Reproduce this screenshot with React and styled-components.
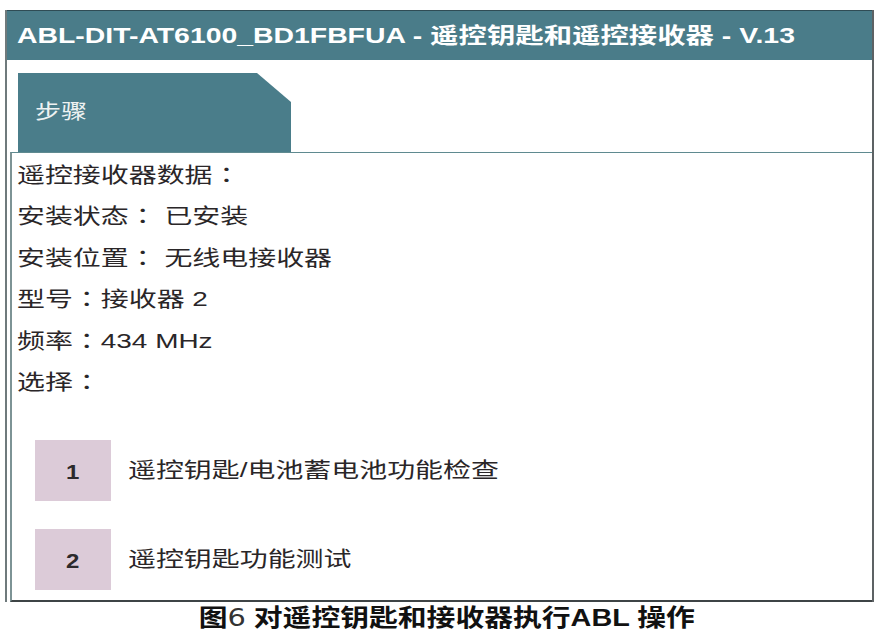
import React from "react";
import styled, { createGlobalStyle } from "styled-components";

// the source is a scanned screen that is stretched sideways, so text is widened with scaleX

const GlobalStyle = createGlobalStyle`
    html, body {
        margin: 0;
        padding: 0;
        background: #fff;
        overflow: hidden;
    }
    body {
        font-family: "Liberation Sans", "Noto Sans CJK SC", sans-serif;
        color: #2a2628;
    }
`;

const Page = styled.div`
    width: 886px;
    height: 631px;
    padding: 10px 0 0 5px;
    box-sizing: border-box;
    overflow: hidden;
`;

const Frame = styled.div`
    width: 869px;
    height: 592px;
    box-sizing: border-box;
    border-left: 2px solid #6f7a7c;
    border-right: 2px solid #5d6264;
    display: flex;
    flex-direction: column;
`;

const Wide = styled.span`
    display: inline-block;
    white-space: nowrap;
    transform: scaleX(${(p) => p.$scale || 1.33});
    transform-origin: ${(p) => (p.$center ? "center" : "left")} center;
`;

// full-width colon sitting in the middle of its cell, as in the source
const Colon = styled.span`
    font-family: "Noto Sans CJK TC", sans-serif;
    line-height: 0;
`;

const Header = styled.div`
    height: 50px;
    flex-shrink: 0;
    background: #4a7c89;
    border-top: 1px solid #2f4c55;
    box-sizing: border-box;
    display: flex;
    align-items: center;
    padding: 0 0 5px 10px;
    color: #fff;
    font-weight: bold;
    font-size: 22px;
`;

const Body = styled.div`
    flex: 1;
    display: flex;
    flex-direction: column;
    padding-top: 13px;
`;

const Tab = styled.div`
    margin-left: 11px;
    width: 273px;
    height: 79px;
    flex-shrink: 0;
    background: #4a7d8a;
    clip-path: polygon(0 0, 239px 0, 273px 29px, 273px 100%, 0 100%);
    color: #eef2f2;
    font-size: 20px;
    display: flex;
    align-items: center;
    padding: 0 0 4px 17px;
    box-sizing: border-box;
`;

const Panel = styled.div`
    flex: 1;
    margin-left: 3px;
    border-top: 1px solid #5f8a90;
    border-left: 2px solid #7d9395;
    border-bottom: 2px solid #3e4446;
    padding: 1px 0 0 5px;
    display: flex;
    flex-direction: column;
`;

const Line = styled.div`
    font-size: 21px;
    line-height: 41.4px;
    height: 41.4px;
`;

const Options = styled.div`
    display: flex;
    flex-direction: column;
    gap: 28px;
    margin-top: 38px;
    margin-left: 18px;
`;

const Option = styled.div`
    display: flex;
    align-items: center;
    gap: 17px;
`;

const NumBox = styled.div`
    width: 76px;
    height: 61px;
    flex-shrink: 0;
    background: #dccbd8;
    display: flex;
    align-items: center;
    justify-content: center;
    font-weight: bold;
    font-size: 20px;
    color: #2c2a2c;
    padding-top: 4px;
    box-sizing: border-box;
`;

const OptionText = styled.div`
    font-size: 21px;
    margin-top: -6px;
`;

const Caption = styled.div`
    text-align: center;
    padding-left: 2px;
    margin-top: 4px;
    font-size: 24px;
    line-height: 24px;
    font-weight: bold;
    color: #111;
`;

const Six = styled.span`
    font-family: "DejaVu Sans", sans-serif;
    font-weight: normal;
    color: #333;
`;

const lines = [
    ["遥控接收器数据", ""],
    ["安装状态", " 已安装"],
    ["安装位置", " 无线电接收器"],
    ["型号", "接收器 2"],
    ["频率", "434 MHz"],
    ["选择", ""],
];

const options = [
    { num: 1, label: "遥控钥匙/电池蓄电池功能检查" },
    { num: 2, label: "遥控钥匙功能测试" },
];

const App = () => {
    return (
        <Page>
            <GlobalStyle />
            <Frame>
                <Header>
                    <Wide $scale={1.29}>ABL-DIT-AT6100_BD1FBFUA - 遥控钥匙和遥控接收器 - V.13</Wide>
                </Header>
                <Body>
                    <Tab>
                        <Wide $scale={1.3}>步骤</Wide>
                    </Tab>
                    <Panel>
                        {lines.map(([label, value]) => (
                            <Line key={label}>
                                <Wide>
                                    {label}
                                    <Colon>：</Colon>
                                    {value}
                                </Wide>
                            </Line>
                        ))}
                        <Options>
                            {options.map((o) => (
                                <Option key={o.num}>
                                    <NumBox>
                                        <Wide $scale={1.2} $center>{o.num}</Wide>
                                    </NumBox>
                                    <OptionText>
                                        <Wide>{o.label}</Wide>
                                    </OptionText>
                                </Option>
                            ))}
                        </Options>
                    </Panel>
                </Body>
            </Frame>
            <Caption>
                <Wide $scale={1.2} $center>
                    图<Six>6</Six> 对遥控钥匙和接收器执行ABL 操作
                </Wide>
            </Caption>
        </Page>
    );
};

export default App;
